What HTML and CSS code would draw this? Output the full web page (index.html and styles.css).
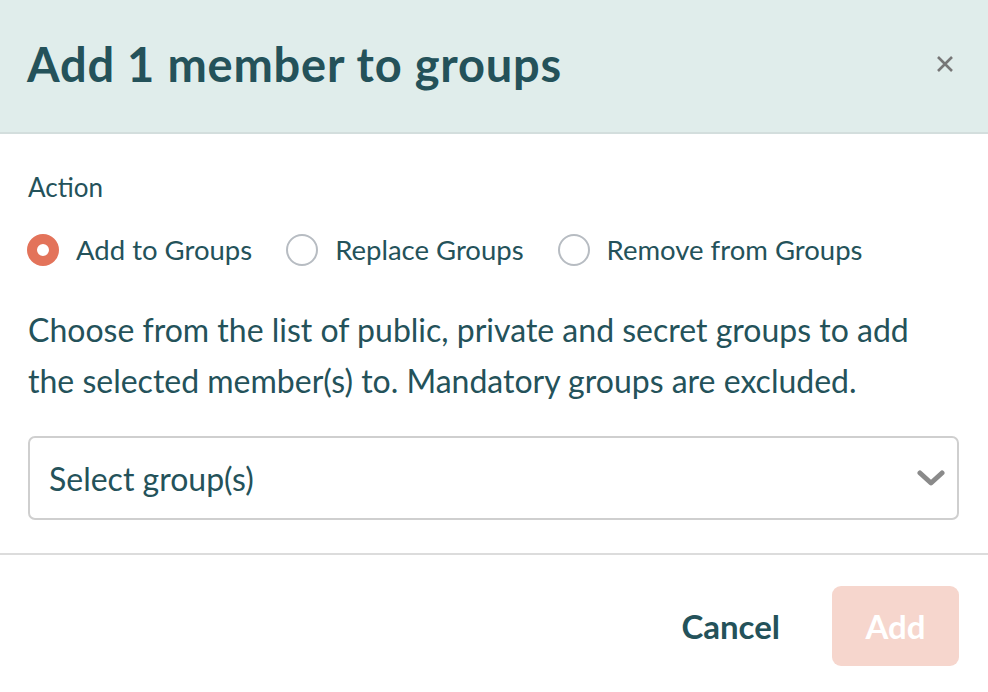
FILE: index.html
```html
<!DOCTYPE html>
<html>
<head>
<meta charset="utf-8">
<link rel="stylesheet" href="styles.css">
</head>
<body>
<div class="modal">
  <header class="modal-header">
    <h1 class="title">Add 1 member to groups</h1>
    <button class="close" aria-label="Close">
      <svg width="20" height="20" viewBox="0 0 20 20"><path d="M3 3 L17 17 M17 3 L3 17" stroke="#777" stroke-width="2.6" stroke-linecap="butt" fill="none"/></svg>
    </button>
  </header>
  <section class="modal-body">
    <div class="label">Action</div>
    <div class="radios">
      <label class="radio"><span class="dot checked"></span>Add to Groups</label>
      <label class="radio"><span class="dot"></span>Replace Groups</label>
      <label class="radio"><span class="dot"></span>Remove from Groups</label>
    </div>
    <p class="desc">Choose from the list of public, private and secret groups to add the selected member(s) to. Mandatory groups are excluded.</p>
    <div class="select">
      <span>Select group(s)</span>
      <svg width="28" height="20" viewBox="0 0 28 20"><path d="M3 5 L14 15 L25 5" stroke="#8a8a8a" stroke-width="5" fill="none" stroke-linecap="round" stroke-linejoin="round"/></svg>
    </div>
  </section>
  <footer class="modal-footer">
    <button class="btn-cancel">Cancel</button>
    <button class="btn-add">Add</button>
  </footer>
</div>
</body>
</html>
```
FILE: styles.css
```css
* { box-sizing: border-box; }
html, body { margin: 0; padding: 0; background: #fff; }
body { font-family: Lato, "Open Sans", sans-serif; color: #24525a; }
.modal { width: 988px; height: 692px; display: flex; flex-direction: column; }
.modal-header {
  height: 134px; background: #e0edeb; border-bottom: 2px solid #d3dedd;
  display: flex; align-items: center; justify-content: space-between;
  padding: 0 33px 4px 27px;
}
.title { margin: 0; font-size: 47px; font-weight: 700; letter-spacing: 0.8px; color: #24525a; line-height: 56px; }
.close { background: none; border: 0; padding: 0; width: 20px; height: 20px; display: flex; }
.modal-body { padding: 38px 29px 0 28px; border-bottom: 2px solid #dcdcdc; height: 421px; }
.label { font-size: 26px; line-height: 30px; }
.radios { display: flex; gap: 34px; margin-top: 32px; margin-left: -1px; }
.radio { display: flex; align-items: center; gap: 17px; font-size: 27.5px; line-height: 32px; }
.dot { width: 32px; height: 32px; border-radius: 50%; border: 2px solid #b7bcc2; display: inline-block; flex: none; }
.dot.checked { border: 10px solid #e3735a; background: #fff; }
.desc { margin: 38px 0 0; max-width: 905px; font-size: 32px; line-height: 51px; }
.select {
  margin-top: 30px; height: 84px; border: 2px solid #cfcfcf; border-radius: 7px;
  display: flex; align-items: center; justify-content: space-between;
  padding: 0 12px 0 19px; font-size: 32px;
}
.modal-footer { flex: 1; display: flex; align-items: center; justify-content: flex-end; padding: 5px 29px 0 0; gap: 52px; }
.btn-cancel { background: none; border: 0; font-family: inherit; font-size: 33px; font-weight: 700; color: #24525a; padding: 0; }
.btn-add {
  width: 127px; height: 80px; border: 0; border-radius: 9px; background: #f6d6cd;
  color: #fff; font-family: inherit; font-size: 33px; font-weight: 700;
}
```
